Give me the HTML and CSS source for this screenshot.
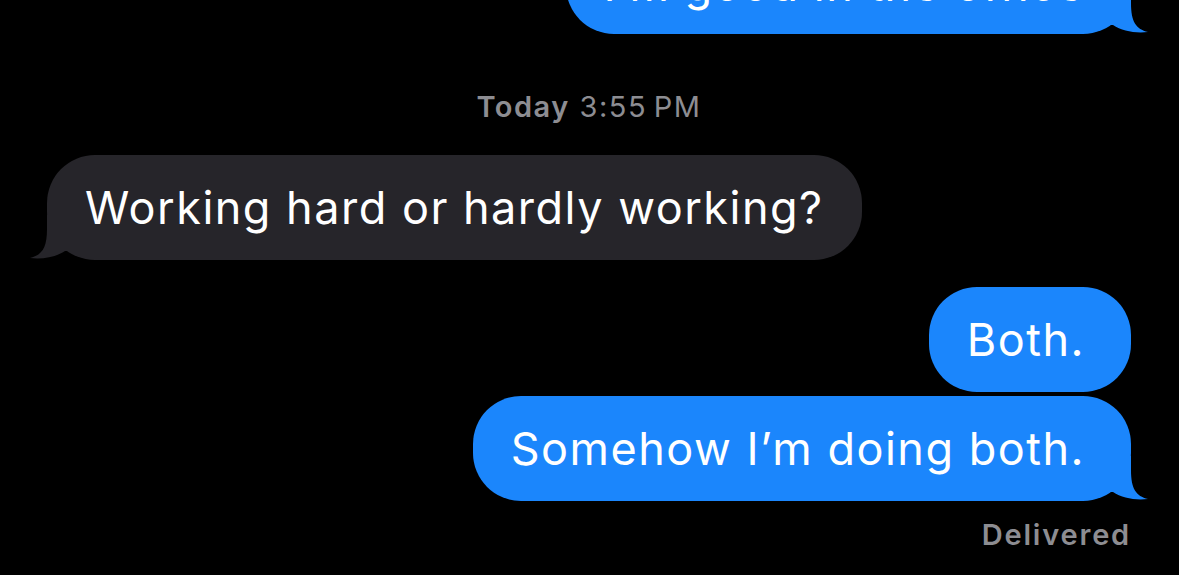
FILE: index.html
```html
<!DOCTYPE html>
<html lang="en">

<head>
    <meta charset="UTF-8">
    <meta name="viewport" content="width=device-width, initial-scale=1.0">
    <title>Messages</title>
    <link rel="stylesheet" href="styles.css">
</head>

<body>
    <div class="thread">
        <div class="bubble sent first">
            I’m good in the office
            <svg class="tail" viewBox="0 0 57 45" width="57" height="45"><path d="M0 0 L40 0 L40 14 C40 33 45 40 57 43 C44 44.5 31 42 22 36 L0 36 Z" /></svg>
        </div>

        <div class="stamp"><b>Today</b> 3:55&#8239;PM</div>

        <div class="bubble received">
            Working hard or hardly working?
            <svg class="tail" viewBox="0 0 57 45" width="57" height="45"><path d="M0 0 L40 0 L40 14 C40 33 45 40 57 43 C44 44.5 31 42 22 36 L0 36 Z" /></svg>
        </div>

        <div class="bubble sent plain">Both.</div>
        <div class="bubble sent last">
            Somehow I’m doing both.
            <svg class="tail" viewBox="0 0 57 45" width="57" height="45"><path d="M0 0 L40 0 L40 14 C40 33 45 40 57 43 C44 44.5 31 42 22 36 L0 36 Z" /></svg>
        </div>

        <div class="status">Delivered</div>
    </div>
</body>
</html>
```

FILE: styles.css
```css
/* dark mode message thread */

body {
    margin: 0;
    background: #000;
    font-family: "Inter", "Noto Sans", sans-serif;
    overflow: hidden;
}

.thread {
    --sent-color: #1b86fc;
    --received-color: #26252a;
    --meta-color: #8d8d92;
    display: flex;
    flex-direction: column;
    padding: 0 48px 0 47px;
}

/* bubbles */

.bubble {
    position: relative;
    padding: 26px 38px;
    font-size: 45px;
    line-height: 53px;
    letter-spacing: 1.5px;
    color: #fff;
    border-radius: 48px;
    white-space: nowrap;
}

.bubble .tail {
    position: absolute;
    bottom: 0;
    right: -17px;
    display: block;
}

.sent {
    align-self: flex-end;
    padding-right: 46px;
    background: var(--sent-color);
}

.sent .tail {
    fill: var(--sent-color);
}

.received {
    align-self: flex-start;
    background: var(--received-color);
    margin-bottom: 27px;
}

.received .tail {
    right: auto;
    left: -17px;
    transform: scaleX(-1);
    fill: var(--received-color);
}

.first {
    margin-top: -71px;
    padding-top: 29px;
    padding-bottom: 23px;
}

.plain {
    margin-bottom: 4px;
}

/* meta text */

.stamp {
    margin: 56px 0 31px;
    text-align: center;
    font-size: 29px;
    line-height: 34px;
    letter-spacing: 1.5px;
    color: var(--meta-color);
}

.stamp b {
    font-weight: 600;
}

.status {
    align-self: flex-end;
    margin-top: 17px;
    font-size: 29px;
    line-height: 34px;
    letter-spacing: 1.8px;
    font-weight: 600;
    color: var(--meta-color);
}
```
